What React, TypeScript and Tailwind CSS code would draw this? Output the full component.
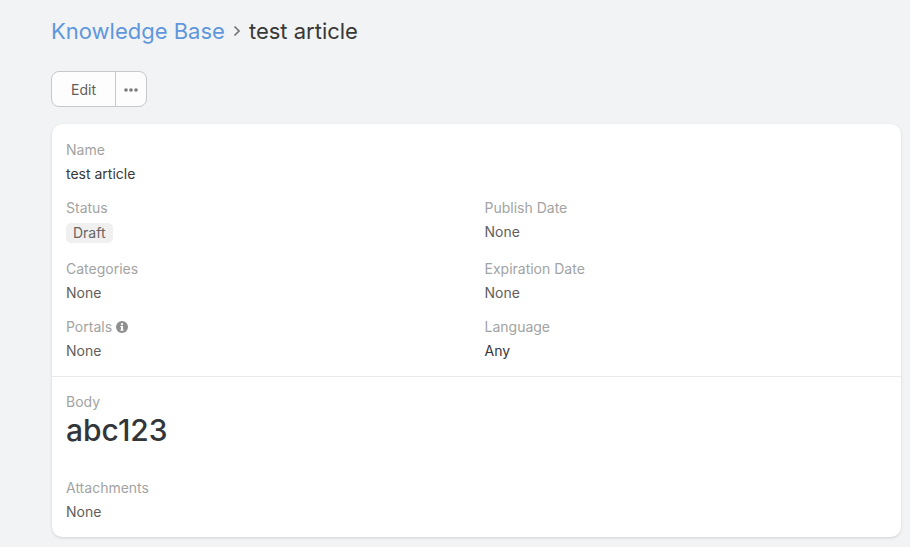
import React from "react";

function Field({ label, children, info, className }: { label: string; children: React.ReactNode; info?: boolean; className?: string }) {
  return (
    <div className={className}>
      <div className="flex items-center gap-[4px] text-[14px] leading-[20px] text-[#a3a3a3]">
        {label}
        {info && (
          <svg width="12" height="12" viewBox="0 0 12 12">
            <circle cx="6" cy="6" r="6" fill="#8f8f8f" />
            <rect x="5" y="5" width="2" height="4.4" fill="#fff" />
            <rect x="4.2" y="5" width="1.6" height="0.9" fill="#fff" />
            <rect x="4.2" y="8.6" width="3.6" height="0.9" fill="#fff" />
            <circle cx="6" cy="3.2" r="1.1" fill="#fff" />
          </svg>
        )}
      </div>
      <div className="mt-[4px]">{children}</div>
    </div>
  );
}

const None = () => <div className="text-[14px] leading-[20px] text-[#625e5a]">None</div>;

export default function App() {
  return (
    <div className="h-[547px] overflow-hidden bg-[#f2f3f5] pl-[52px] pr-[9px] pt-[16px] font-['Inter','Liberation_Sans',sans-serif]">
      <div className="-ml-[1px] flex h-[30px] items-center text-[22px] leading-[30px] text-[#383838]">
        <span className="text-[#5f97dc]">Knowledge Base</span>
        <svg className="ml-[8px] mr-[8px]" width="8" height="12" viewBox="0 0 8 12" fill="none" stroke="#757575" strokeWidth="1.7">
          <path d="M1.5 1.5 6 6l-4.5 4.5" />
        </svg>
        <span>test article</span>
      </div>

      <div className="-ml-[1px] mt-[25px] flex h-[36px] w-[96px] rounded-[8px] border border-[#c4c9cc] bg-[#fdfdfd]">
        <div className="flex w-[64px] items-center justify-center border-r border-[#c4c9cc] text-[14px] text-[#625e5a]">Edit</div>
        <div className="flex flex-1 items-center justify-center pt-[2px]">
          <svg width="14" height="4" viewBox="0 0 14 4" fill="#7a7a7a">
            <circle cx="2" cy="2" r="1.8" />
            <circle cx="7" cy="2" r="1.8" />
            <circle cx="12" cy="2" r="1.8" />
          </svg>
        </div>
      </div>

      <div className="mt-[17px] h-[413px] rounded-[10px] bg-white shadow-[0_1px_3px_rgba(0,0,0,0.14)]">
        <div className="h-[253px] border-b border-[#e8eaed] px-[14px] pt-[16px]">
          <Field label="Name">
            <div className="text-[14px] leading-[20px] text-[#383838]">test article</div>
          </Field>
          <div className="mt-[14px] grid grid-cols-[418.5px_1fr] gap-y-[14px]">
            <Field label="Status" className="h-[47px]">
              <span className="mt-[5px] flex h-[20px] w-fit rounded-[5px] bg-[#f0f0f0] px-[7px] text-[14px] leading-[20px] text-[#6b6560]">Draft</span>
            </Field>
            <Field label="Publish Date"><None /></Field>
            <Field label="Categories"><None /></Field>
            <Field label="Expiration Date"><None /></Field>
            <Field label="Portals" info><None /></Field>
            <Field label="Language">
              <div className="text-[14px] leading-[20px] text-[#383838]">Any</div>
            </Field>
          </div>
        </div>
        <div className="px-[14px] pt-[15px]">
          <div className="text-[14px] leading-[20px] text-[#a3a3a3]">Body</div>
          <div className="text-[30px] font-medium leading-[36px] text-[#32363a]">abc123</div>
          <div className="mt-[30px] text-[14px] leading-[20px] text-[#a3a3a3]">Attachments</div>
          <div className="mt-[4px]"><None /></div>
        </div>
      </div>
    </div>
  );
}
